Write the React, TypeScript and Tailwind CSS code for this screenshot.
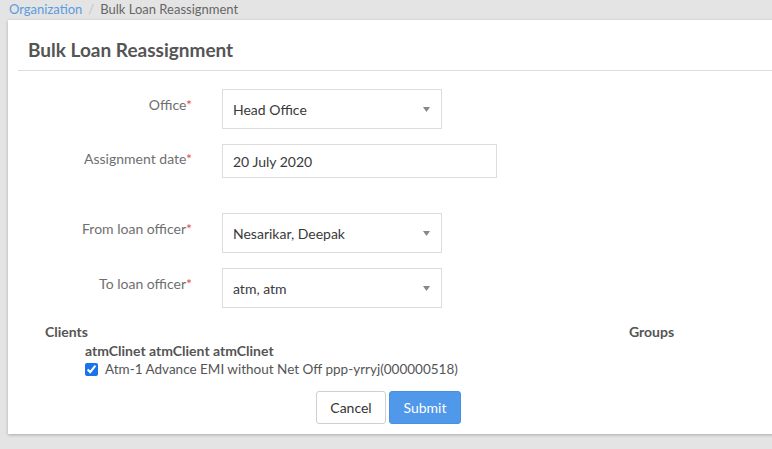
const fieldLabel = "text-right text-[14px] text-[#6f6f6f] pt-[5px]";

function Req() {
  return <span className="text-[#e24c4c]">*</span>;
}

function SelectBox({ value }: { value: string }) {
  return (
    <div className="w-[220px] h-[40px] border border-[#dcdcdc] bg-white flex items-center justify-between pl-[10px] pr-[11px] text-[14px] text-[#3a3a3a]">
      <span>{value}</span>
      <svg width="7" height="5" viewBox="0 0 7 5">
        <path d="M0 0 L7 0 L3.5 5 Z" fill="#888" />
      </svg>
    </div>
  );
}

export default function App() {
  return (
    <div className="h-[449px] w-[772px] overflow-hidden bg-[#e4e4e4] font-['Lato',sans-serif]">
      <div className="h-[20px] pl-[9px] text-[13px] leading-[18px] flex gap-[6px]">
        <span className="text-[#5b9be0]">Organization</span>
        <span className="text-[#c4c4c4]">/</span>
        <span className="text-[#666]">Bulk Loan Reassignment</span>
      </div>
      <div className="ml-[8px] w-[800px] h-[414px] bg-white shadow-[0_1px_3px_rgba(0,0,0,0.25)] px-[10px]">
        <div className="h-[51px] border-b border-[#dedede] pl-[10px] flex items-center">
          <h1 className="text-[19px] font-bold text-[#555] pt-[11px]">Bulk Loan Reassignment</h1>
        </div>

        <div className="mt-[18px] grid grid-cols-[174px_1fr] gap-x-[30px]">
          <div className={fieldLabel}>
            Office<Req />
          </div>
          <SelectBox value="Head Office" />

          <div className="text-right text-[14px] text-[#6f6f6f] pt-[4px] mt-[15px]">
            Assignment date<Req />
          </div>
          <div className="mt-[15px] w-[275px] h-[34px] border border-[#dcdcdc] flex items-center pl-[10px] text-[14px] text-[#3a3a3a]">
            20 July 2020
          </div>

          <div className={`${fieldLabel} mt-[35px]`}>
            From loan officer<Req />
          </div>
          <div className="mt-[35px]">
            <SelectBox value="Nesarikar, Deepak" />
          </div>

          <div className={`${fieldLabel} mt-[15px]`}>
            To loan officer<Req />
          </div>
          <div className="mt-[15px]">
            <SelectBox value="atm, atm" />
          </div>
        </div>

        <div className="mt-[14px] pl-[27px] flex text-[14px] leading-[20px] font-bold text-[#555]">
          <span className="w-[584px]">Clients</span>
          <span>Groups</span>
        </div>
        <div className="pl-[67px] leading-[18px]">
          <div className="text-[14px] font-bold text-[#555]">atmClinet atmClient atmClinet</div>
          <label className="flex items-center gap-[7px] text-[13.5px] text-[#555]">
            <input type="checkbox" defaultChecked className="w-[13px] h-[13px] accent-[#1a73e8]" />
            Atm-1 Advance EMI without Net Off ppp-yrryj(000000518)
          </label>
        </div>

        <div className="mt-[13px] pl-[298px] flex gap-[3px]">
          <button className="w-[70px] h-[33px] border border-[#cfcfcf] rounded-[3px] bg-white text-[14px] text-[#333]">
            Cancel
          </button>
          <button className="w-[72px] h-[33px] border border-[#4a90e2] rounded-[3px] bg-[#4f98ea] text-[14px] text-white">
            Submit
          </button>
        </div>
      </div>
    </div>
  );
}
